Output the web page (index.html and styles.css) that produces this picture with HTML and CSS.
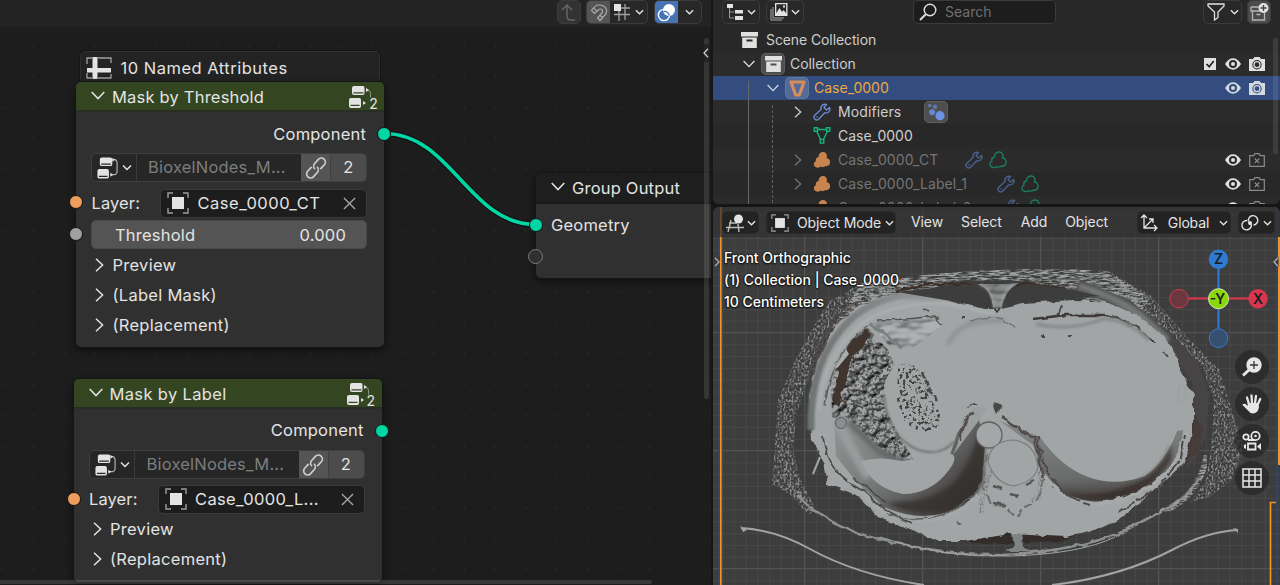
FILE: index.html
```html
<!DOCTYPE html>
<html lang="en">
<head>
<meta charset="utf-8">
<title>Geometry Nodes</title>
<link rel="stylesheet" href="styles.css">
</head>
<body>
<svg class="defs" width="0" height="0">
  <symbol id="down" viewBox="0 0 10 6"><path d="M1 1l4 4 4-4" fill="none" stroke="currentColor" stroke-width="1.5"/></symbol>
  <symbol id="fold" viewBox="0 0 14 9"><path d="M.7 1L7 7.6 13.3 1" fill="none" stroke="currentColor" stroke-width="1.5"/></symbol>
  <symbol id="right" viewBox="0 0 9 14"><path d="M1 .8L7.6 7 1 13.2" fill="none" stroke="currentColor" stroke-width="1.5"/></symbol>
  <symbol id="cross" viewBox="0 0 14 14"><path d="M1 1l12 12M13 1L1 13" fill="none" stroke="currentColor" stroke-width="1.4"/></symbol>
  <symbol id="tree" viewBox="0 0 24 24"><path fill="currentColor" fill-rule="evenodd" d="M6 1h9q2 0 2 2v5q0 2-2 2H6q-2 0-2-2V3q0-2 2-2zm-.5 6.200v1.300h10V7.200zM3.500 13h8q2 0 2 2v6q0 2-2 2h-8q-2 0-2-2v-6q0-2 2-2zM3 20v1.400h9V20z"/><path d="M18 3q4 0 4 4v8q0 4-4 4h-3" fill="none" stroke="currentColor" stroke-width="1.300" opacity=".7"/><path d="M17 1.500v4l3-2zM15 17v4l3-2z" fill="currentColor"/></symbol>
  <symbol id="group" viewBox="0 0 24 24"><path fill="currentColor" fill-rule="evenodd" d="M6 1h9q1.500 0 1.500 2v5q0 2-1.500 2H6q-2 0-2-2V3q0-2 2-2zm-.5 6.200v1.200h10V7.200zM3 13h8.500q1.500 0 1.500 2v6q0 2-1.500 2H3q-2 0-2-2v-6q0-2 2-2zm-.5 6.800v1.300h9v-1.300zM18 3v4l3-2zM15 16v4l3-2z"/><path d="M20 5.500q2.500 0 2.500 3v4" fill="none" stroke="currentColor" opacity=".5"/></symbol>
  <symbol id="link" viewBox="0 0 24 24"><g fill="none" stroke="currentColor" stroke-width="1.700" transform="rotate(-48 12 12)"><path d="M10 8H4a4 4 0 0 0 0 8h5.500a4 4 0 0 0 4-4"/><path d="M14 16h6a4 4 0 0 0 0-8h-5.500a4 4 0 0 0-4 4"/></g></symbol>
  <symbol id="object" viewBox="0 0 22 22"><path d="M1 6V1h5M16 1h5v5M21 16v5h-5M6 21H1v-5" fill="none" stroke="currentColor" stroke-width="1.4" opacity=".65"/><rect x="5" y="5" width="12" height="12" fill="currentColor"/></symbol>
  <symbol id="sheet" viewBox="0 0 26 22"><path d="M1 7V1h5M12 1h13v5M25 17v4H12M6 21H1v-5" fill="none" stroke="currentColor" stroke-width="1.3" opacity=".65"/><path d="M6.500 0h5v11H25v4.500H11.500V22h-5v-6.500H1V11h5.500z" fill="currentColor"/></symbol>
  <symbol id="box" viewBox="0 0 17 16"><path fill="currentColor" fill-rule="evenodd" d="M0 0h17v4.500H0zM1.200 5.500h14.600V16H1.200zM5.500 7.500v2h6v-2z"/></symbol>
  <symbol id="wrench" viewBox="0 0 18 18"><path d="M16.500 4.500l-3 2.500-2.500-2.500L13.500 1.500C10.500.3 7.300 2.500 8 6.500L1.800 12.200C.5 13.500 1 15.200 2 16.200s2.700 1 3.800-.2L11.500 10C15.500 10.700 17.700 7.500 16.500 4.500z" fill="none" stroke="currentColor" stroke-width="1.5" stroke-linejoin="round"/><circle cx="4" cy="14" r=".8" fill="currentColor"/></symbol>
  <symbol id="mesh" viewBox="0 0 17 17"><g fill="none" stroke="currentColor" stroke-width="1.4"><path d="M4 2.500h9M3.300 4.500L7 12.500M13.700 4.500L10 12.500"/><path d="M.7.700H4v3.600H.7zM13 .7h3.300v3.600H13zM6.800 12.500h3.400v3.600H6.800z"/></g></symbol>
  <symbol id="cloud" viewBox="0 0 18 18"><path d="M5.500 6C5.500 2.500 8 .7 10.500 1c3 .4 4.300 3.500 3 6 2.700.5 4.200 3 3.400 5.500-.7 2-2.500 3-4.500 2.500-1.300 1.500-3.500 1.300-4.500.6C6 17.300 1.800 17 1 14c-.4-1.800.3-3 1.800-3.800C2.300 8 3.500 6.500 5.500 6z"/></symbol>
  <symbol id="eye" viewBox="0 0 16 12"><path fill="currentColor" fill-rule="evenodd" d="M0 6Q3.500.3 8 .3T16 6q-3.500 5.700-8 5.700T0 6zm8-4a4 4 0 1 0 0 8 4 4 0 0 0 0-8z"/><circle cx="8" cy="6" r="2" fill="currentColor"/></symbol>
  <symbol id="camera" viewBox="0 0 16 14"><path fill="currentColor" fill-rule="evenodd" d="M0 2h4l1.500-2h5L12 2h4v12H0zM8 3a4.700 4.700 0 1 0 0 9.400A4.700 4.700 0 0 0 8 3z"/><circle cx="8" cy="7.700" r="3" fill="none" stroke="currentColor" stroke-width="1.300"/></symbol>
  <symbol id="nocam" viewBox="0 0 16 14"><path d="M.7 2.700h4L6 .7h4l1.300 2h4v10.600H.7zM5.700 5.500l4.600 4.600M10.300 5.500l-4.600 4.600" fill="none" stroke="currentColor" stroke-width="1.200"/></symbol>
</svg>

<main class="app">
  <section class="nodes">
    <header class="bar nodes-bar">
      <span class="btn up"><svg width="24" height="23" viewBox="0 0 24 23"><path d="M5 9l5-5 5 5M10 4v11q0 4 4 4h4" fill="none" stroke="currentColor" stroke-width="1.400"/></svg></span>
      <span class="btn snap"><b class="seg on"><svg width="23" height="23" viewBox="0 0 23 23"><path d="M4.500 9.500Q8 4 12 4q6 0 7.500 5 .5 4-3 6.500L13 19.500 10.500 17l4-4.500q1.800-2 .8-3.500-1.800-2-4 0L7.500 12.500zM6.800 7.200l3 3M13 14.300l2.700 2.400" fill="none" stroke="currentColor" stroke-width="1.200"/></svg></b><b class="seg"><svg width="18" height="18" viewBox="0 0 18 18"><path d="M1 11.500h16M6 8v10M8 5h9M12 1v16" stroke="currentColor" stroke-width="1.300" opacity=".65"/><rect x="1" y="1" width="7" height="7" fill="currentColor"/></svg><svg width="9" height="6"><use href="#down"/></svg></b></span>
      <span class="btn over"><b class="seg blue"><svg width="19" height="19" viewBox="0 0 19 19"><circle cx="7" cy="12" r="5.600" fill="none" stroke="#fff" stroke-width="1.400"/><circle cx="12" cy="7" r="6" fill="#fff"/><path d="M6.500 8.500q4-1 6 4" fill="none" stroke="#4772b3" stroke-width="1.200"/></svg></b><b class="seg"><svg width="9" height="6"><use href="#down"/></svg></b></span>
    </header>
    <div class="canvas">
      <svg class="wire" width="160" height="100" viewBox="0 0 160 100"><path d="M4 4.500C72 4.500 88 95.500 156 95.500" fill="none" stroke="#121212" stroke-width="6"/><path d="M4 4.500C72 4.500 88 95.500 156 95.500" fill="none" stroke="#00d6a3" stroke-width="3.600"/></svg>

      <div class="tag"><svg width="26" height="22"><use href="#sheet"/></svg><span>10 Named Attributes</span></div>

      <article class="node threshold-node">
        <h2><svg class="fold" width="14" height="9"><use href="#fold"/></svg><span>Mask by Threshold</span><svg class="grp" width="24" height="24"><use href="#group"/></svg><small>2</small></h2>
        <div class="row out">Component</div>
        <div class="data"><span class="pick"><svg width="23" height="24"><use href="#tree"/></svg><svg width="10" height="7"><use href="#down"/></svg></span><span class="name">BioxelNodes_M...</span><span class="lnk"><svg width="24" height="24"><use href="#link"/></svg></span><span class="users">2</span></div>
        <div class="row layer"><span>Layer:</span><span class="field"><svg width="22" height="22"><use href="#object"/></svg><span>Case_0000_CT</span><svg width="13" height="13"><use href="#cross"/></svg></span></div>
        <div class="slider"><span>Threshold</span><span>0.000</span></div>
        <div class="row panel"><svg width="9" height="14"><use href="#right"/></svg>Preview</div>
        <div class="row panel"><svg width="9" height="14"><use href="#right"/></svg>(Label Mask)</div>
        <div class="row panel"><svg width="9" height="14"><use href="#right"/></svg>(Replacement)</div>
        <i class="socket green s1"></i><i class="socket orange s2"></i><i class="socket grey s3"></i>
      </article>

      <article class="node label-node">
        <h2><svg class="fold" width="14" height="9"><use href="#fold"/></svg><span>Mask by Label</span><svg class="grp" width="24" height="24"><use href="#group"/></svg><small>2</small></h2>
        <div class="row out">Component</div>
        <div class="data"><span class="pick"><svg width="23" height="24"><use href="#tree"/></svg><svg width="10" height="7"><use href="#down"/></svg></span><span class="name">BioxelNodes_M...</span><span class="lnk"><svg width="24" height="24"><use href="#link"/></svg></span><span class="users">2</span></div>
        <div class="row layer"><span>Layer:</span><span class="field"><svg width="22" height="22"><use href="#object"/></svg><span>Case_0000_L...</span><svg width="13" height="13"><use href="#cross"/></svg></span></div>
        <div class="row panel"><svg width="9" height="14"><use href="#right"/></svg>Preview</div>
        <div class="row panel"><svg width="9" height="14"><use href="#right"/></svg>(Replacement)</div>
        <i class="socket green s1"></i><i class="socket orange s2"></i>
      </article>

      <article class="node output-node">
        <h2><svg class="fold" width="14" height="9"><use href="#fold"/></svg><span>Group Output</span></h2>
        <div class="row in">Geometry</div>
        <i class="socket green s4"></i><i class="socket hollow s5"></i>
      </article>
      <i class="scroll-v"></i><i class="scroll-h"></i>
      <span class="tab"><svg width="6" height="10" viewBox="0 0 6 10"><path d="M5 .7L1 5l4 4.300" fill="none" stroke="#ccc" stroke-width="1.300"/></svg></span>
    </div>
  </section>

  <div class="side">
    <section class="outliner">
      <header class="bar out-bar">
        <span class="btn b1"><svg width="18" height="18" viewBox="0 0 18 18"><path d="M1 1h6v4H1zM9 7h8v3.500H9zM9 13h8v4H9z" fill="currentColor"/><path d="M3.500 5v10H8M3.500 9H8" fill="none" stroke="currentColor" opacity=".6"/></svg><svg width="9" height="6"><use href="#down"/></svg></span>
        <span class="btn b2"><svg width="18" height="18" viewBox="0 0 18 18"><path d="M1 6v11h11M3 4v11h11" fill="none" stroke="currentColor" opacity=".7"/><path fill="currentColor" fill-rule="evenodd" d="M5 0h12.500v13H5zm1.300 1.300v9L9.500 5l2.500 4 1.500-2 2.700 3.300v-9zM13 2.500h2v2h-2z"/></svg><svg width="9" height="6"><use href="#down"/></svg></span>
        <span class="search"><svg width="18" height="18" viewBox="0 0 18 18"><circle cx="11" cy="7" r="5.800" fill="none" stroke="currentColor" stroke-width="1.400"/><path d="M7 11l-6 6" stroke="currentColor" stroke-width="2"/></svg><span>Search</span></span>
        <span class="btn b3"><svg width="18" height="18" viewBox="0 0 18 18"><path d="M1 1h16v2l-6 6v5.500L7.500 17V9L1 3z" fill="none" stroke="currentColor" stroke-width="1.300"/></svg><svg width="9" height="6"><use href="#down"/></svg></span>
        <span class="btn b4"><svg width="19" height="19" viewBox="0 0 19 19"><path d="M1 4h8M1 4v4h15M2.500 8v9h12V9M6.500 11.500h4" fill="none" stroke="currentColor" stroke-width="1.300" opacity=".7"/><circle cx="13.500" cy="5" r="5" fill="currentColor"/><path d="M10.500 5h6M13.500 2v6" stroke="#444" stroke-width="1.400"/></svg></span>
      </header>
      <div class="rows">
        <div class="item l0"><svg width="17" height="16"><use href="#box"/></svg><span>Scene Collection</span></div>
        <div class="item l1"><svg class="tw" width="12" height="8"><use href="#fold"/></svg><span class="hl"><svg width="17" height="16"><use href="#box"/></svg></span><span>Collection</span><span class="flags"><svg width="12" height="12" viewBox="0 0 12 12"><path d="M0 0h12v12H0z" fill="currentColor"/><path d="M2.500 6l2.700 2.700L9.700 3" fill="none" stroke="#222" stroke-width="1.700"/></svg><svg width="16" height="12"><use href="#eye"/></svg><svg width="16" height="14"><use href="#camera"/></svg></span></div>
        <div class="item l2 active"><svg class="tw" width="12" height="8"><use href="#fold"/></svg><span class="hl"><svg width="17" height="17" viewBox="0 0 17 17"><path d="M2 2h13L10.300 15H6.700z" fill="none" stroke="#d58d60" stroke-width="3.200" stroke-linejoin="round"/></svg></span><span>Case_0000</span><span class="flags"><svg width="16" height="12"><use href="#eye"/></svg><svg width="16" height="14"><use href="#camera"/></svg></span></div>
        <div class="item l3"><svg class="tw" width="8" height="12"><use href="#right"/></svg><svg class="ic wr" width="18" height="18"><use href="#wrench"/></svg><span>Modifiers</span><span class="hl mod"><svg width="18" height="18" viewBox="0 0 18 18" fill="#6c93e6"><circle cx="2.800" cy="2.500" r="1.800" opacity=".6"/><circle cx="8" cy="3.700" r="2.200" opacity=".6"/><circle cx="5.200" cy="9.300" r="3" opacity=".85"/><circle cx="13" cy="12.700" r="4.600"/></svg></span></div>
        <div class="item l3 leaf"><svg class="ic ms" width="18" height="17"><use href="#mesh"/></svg><span>Case_0000</span></div>
        <div class="item l3 dim"><svg class="tw" width="8" height="12"><use href="#right"/></svg><svg class="ic vol" width="18" height="18"><use href="#cloud"/></svg><span>Case_0000_CT</span><svg class="m1" width="18" height="18"><use href="#wrench"/></svg><svg class="m2" width="18" height="18"><use href="#cloud"/></svg><span class="flags"><svg width="16" height="12"><use href="#eye"/></svg><svg width="16" height="14"><use href="#nocam"/></svg></span></div>
        <div class="item l3 dim"><svg class="tw" width="8" height="12"><use href="#right"/></svg><svg class="ic vol" width="18" height="18"><use href="#cloud"/></svg><span>Case_0000_Label_1</span><svg class="m1" width="18" height="18"><use href="#wrench"/></svg><svg class="m2" width="18" height="18"><use href="#cloud"/></svg><span class="flags"><svg width="16" height="12"><use href="#eye"/></svg><svg width="16" height="14"><use href="#nocam"/></svg></span></div>
        <div class="item l3 dim"><svg class="tw" width="8" height="12"></svg><svg class="ic vol" width="18" height="18"><use href="#cloud"/></svg><span>Case_0000_Label_2</span><svg class="m1" width="18" height="18"><use href="#wrench"/></svg><svg class="m2" width="18" height="18"><use href="#cloud"/></svg><span class="flags"><svg width="16" height="12"><use href="#eye"/></svg><svg width="16" height="14"><use href="#nocam"/></svg></span></div>
        <i class="guide g1"></i><i class="guide g2"></i><i class="oscroll"></i>
      </div>
    </section>

    <section class="viewport">
      <svg class="scene" width="567" height="378" viewBox="713 207 567 378">
        <defs>
          <pattern id="minor" x="804.500" y="332.500" width="11.800" height="11.800" patternUnits="userSpaceOnUse"><path d="M.5 0v11.800M0 .5h11.800" stroke="#474747" stroke-width="1"/></pattern>
          <pattern id="major" x="804" y="332" width="118" height="118" patternUnits="userSpaceOnUse"><path d="M.5 0v118M0 .5h118" stroke="#525252" stroke-width="1.200"/></pattern>
          <filter id="speck" x="-5%" y="-5%" width="110%" height="110%" color-interpolation-filters="sRGB"><feTurbulence type="fractalNoise" baseFrequency=".5 .35" numOctaves="3" seed="4"/><feColorMatrix values="0 0 0 0 0  0 0 0 0 0  0 0 0 0 0  3.500 0 0 0 -1.550" result="n"/><feComposite in="SourceGraphic" in2="n" operator="in"/></filter>
          <filter id="streak" x="0" y="0" width="100%" height="100%" color-interpolation-filters="sRGB"><feTurbulence type="fractalNoise" baseFrequency=".1 .6" numOctaves="3" seed="9"/><feColorMatrix values="0 0 0 0 0  0 0 0 0 0  0 0 0 0 0  3.500 0 0 0 -1.300" result="n"/><feComposite in="SourceGraphic" in2="n" operator="in"/></filter>
          <filter id="gut" x="0" y="0" width="100%" height="100%" color-interpolation-filters="sRGB"><feTurbulence type="fractalNoise" baseFrequency=".13 .15" numOctaves="3" seed="12"/><feGaussianBlur stdDeviation=".6"/><feDiffuseLighting surfaceScale="4.500" diffuseConstant="1" lighting-color="#a6aaaa" result="l"><feDistantLight azimuth="235" elevation="58"/></feDiffuseLighting><feComposite in="l" in2="SourceGraphic" operator="in"/></filter>
          <filter id="grain" x="0" y="0" width="100%" height="100%" color-interpolation-filters="sRGB"><feTurbulence type="fractalNoise" baseFrequency=".05 .09" numOctaves="2" seed="5" result="t"/><feDiffuseLighting in="t" surfaceScale="3" diffuseConstant="1.080" lighting-color="#fff" result="l"><feDistantLight azimuth="250" elevation="58"/></feDiffuseLighting><feComposite in="l" in2="SourceGraphic" operator="arithmetic" k1="1"/><feComposite in2="SourceGraphic" operator="in"/></filter>
          <filter id="pits" x="0" y="0" width="100%" height="100%" color-interpolation-filters="sRGB"><feTurbulence type="fractalNoise" baseFrequency=".32" numOctaves="2" seed="3"/><feColorMatrix values="0 0 0 0 0  0 0 0 0 0  0 0 0 0 0  8 0 0 0 -4.200" result="n"/><feComposite in="SourceGraphic" in2="n" operator="in"/></filter>
          <filter id="rough" x="-10%" y="-10%" width="120%" height="120%" color-interpolation-filters="sRGB"><feTurbulence type="fractalNoise" baseFrequency=".1" numOctaves="2" seed="7"/><feDisplacementMap in="SourceGraphic" scale="6" xChannelSelector="R" yChannelSelector="G"/><feGaussianBlur stdDeviation=".5"/></filter>
          <filter id="soft" x="-20%" y="-20%" width="140%" height="140%"><feGaussianBlur stdDeviation="2.200"/></filter>
          <filter id="fine"><feGaussianBlur stdDeviation=".8"/></filter>
          <linearGradient id="lungL" x1="0" y1="0" x2="1" y2=".7"><stop offset="0" stop-color="#929595"/><stop offset=".45" stop-color="#7b7d7d"/><stop offset=".72" stop-color="#5d5d5d"/><stop offset="1" stop-color="#3b3432"/></linearGradient>
          <linearGradient id="lungR" x1="0" y1="0" x2=".15" y2="1"><stop offset="0" stop-color="#858888"/><stop offset=".75" stop-color="#6a6c6c"/><stop offset="1" stop-color="#484341"/></linearGradient>
          <linearGradient id="wall" x1="810" y1="0" x2="950" y2="0" gradientUnits="userSpaceOnUse"><stop offset="0" stop-color="#707373"/><stop offset="1" stop-color="#9b9e9e"/></linearGradient>
        </defs>
        <rect x="713" y="207" width="567" height="378" fill="#3d3d3d"/>
        <rect x="713" y="207" width="567" height="378" fill="url(#minor)"/>
        <rect x="713" y="207" width="567" height="378" fill="url(#major)"/>
        <path d="M719 207v378M1276.500 207v378" stroke="#2d4669" stroke-width="1.500"/>

        <!-- skin shell -->
        <g filter="url(#speck)" fill="#a0a3a3" opacity=".8">
          <path d="M772 485L778 400 799 352 828 302 862 283 900 285 850 325 826 355 806 385 796 415 793 450 800 478 815 508 800 503 779 487z"/>
          <path d="M1110 272L1150 295 1190 340 1219 369 1232 410 1244 448 1232 480 1211 496 1190 503 1206 480 1211 450 1214 400 1203 368 1170 332 1120 300z"/>
        </g>
        <path d="M784 462Q785 488 812 512" fill="none" stroke="#8b8e8e" stroke-width="8" filter="url(#speck)"/>
        <g filter="url(#streak)"><path d="M862 283Q980 264 1108 271L1150 298 1135 320 1060 287 1010 280 960 281 870 304 830 330z" fill="#a0a3a3"/></g>
        <path d="M798 495Q808 508 820 514 850 534 900 544 950 555 1000 554 1065 553 1118 534 1145 520 1160 512 1187 500 1203 475" fill="none" stroke="#8d9090" stroke-width="2.600" filter="url(#rough)"/>
        <path d="M880 537Q940 558 1010 556T1115 537" fill="none" stroke="#a2a5a5" stroke-width="1"/>
        <path d="M1160 512Q1198 500 1207 455" fill="none" stroke="#999c9c" stroke-width="6" filter="url(#streak)"/>

        <!-- dark muscle wall -->
        <path d="M1075 291Q1120 303 1158 334L1192 382 1194 430 1186 468 1198 455 1207 430 1209 395 1198 362 1168 332 1130 300 1080 280z" fill="#464444"/>
        <path d="M1190 405l12 25-1 18-23 24z" fill="#463a36" opacity=".75" filter="url(#rough)"/>
        <path d="M1078 286Q1125 297 1168 341M1090 291q42 10 68 42" fill="none" stroke="#777a7a" stroke-width="7" filter="url(#soft)"/>
        <path d="M920 532L985 545 1060 541 1110 523 1080 531 1000 530z" fill="#342c29" filter="url(#rough)"/>
        <path d="M1012 533h9l2 14 8 4h-25l8-5z" fill="#808383" filter="url(#rough)"/>
        <path d="M813 385Q822 335 865 303L850 302Q814 335 807 382z" fill="#493f3b" filter="url(#speck)"/>

        <!-- body -->
        <g filter="url(#rough)"><path d="M810 407Q809 372 830 336 848 308 872 301 890 292 930 297L985 309 997 309 1023 303 1073 300Q1118 300 1147 323 1172 338 1180 368L1193 395 1193 430 1183 465 1163 483 1137 505 1123 517 1090 532 1065 537 1010 534 965 541 937 541 910 529 880 518 857 495 827 484 822 456 812 440z" fill="#a1a5a5"/></g>
        <path d="M811 430Q809 360 850 320 874 299 905 295L950 299" fill="none" stroke="url(#wall)" stroke-width="7" filter="url(#fine)"/>
        <path d="M819 410Q822 355 866 321 893 303 946 303L994 314" fill="none" stroke="#adb0b0" stroke-width="2.500" filter="url(#fine)"/>
        <path d="M825 405Q831 355 868 325" fill="none" stroke="#5d5e5e" stroke-width="1.500" filter="url(#rough)"/>
        <path d="M897 292L943 287 974 285Q988 287 991 308L963 303z" fill="#3e3d3d"/>
        <path d="M897 292L925 284 973 284M1067 290l-37-7-15 4" fill="none" stroke="#3a2e29" stroke-width="2.500" filter="url(#rough)"/>
        <path d="M1005 302Q1011 285 1030 284L1067 289 1100 296 1057 299z" fill="#3e3d3d"/>
        <path d="M976 284Q991 287 993 309L1001 309Q1006 288 1020 283L1002 284z" fill="#8b8e8e" filter="url(#grain)"/>
        <path d="M980 285q12 3 14 22M1013 284q-11 8-12 24" fill="none" stroke="#a9acac" stroke-width="1.200" filter="url(#fine)"/>
        <path d="M994 308l3 4 3-4" fill="none" stroke="#3a3636" stroke-width="1.500"/>

        <!-- folds under the upper wall -->
        <path d="M870 323l30-3 35-3 8 7-18 15-12 9-24-2z" fill="#adb1b1" filter="url(#grain)"/>
        <path d="M869 322l15 12 18 14" fill="none" stroke="#7c7f7f" stroke-width="3.500" filter="url(#rough)"/>
        <path d="M876 320q30 0 58-4l8 8" fill="none" stroke="#525353" stroke-width="1.300" filter="url(#rough)"/>
        <path d="M948 345q8-21 36-24l20-1" fill="none" stroke="#8b8e8e" stroke-width="4" filter="url(#soft)"/>
        <path d="M970 321q18-6 33-2l12 8" fill="none" stroke="#6c6f6f" stroke-width="1.300" filter="url(#rough)"/>
        <path d="M1033 319l32-4 38 0Q1125 315 1154 342" fill="none" stroke="#3d3939" stroke-width="2.300" filter="url(#rough)"/>
        <path d="M1036 324q32 8 67-5 24 0 46 21" fill="none" stroke="#8b8e8e" stroke-width="4" filter="url(#fine)"/>
        <path d="M1058 315l4-10M1164 352l4 5M1041 336h3M1069 335h3M962 318h4M924 308l5 4" stroke="#4b4949" stroke-width="2" filter="url(#rough)"/>
        <ellipse cx="1182" cy="394" rx="4" ry="9" fill="none" stroke="#999c9c"/>

        <!-- bowel -->
        <path d="M868 328l20 22 10 22-14 12 3 28 11 22 16 26-14 2-24-8-15-20-17-14-12-3-1-28 4-25z" fill="#888" filter="url(#gut)"/>
        <path d="M868 335l20 20 6 16-12 12 3 28 11 22 12 22-12 2-20-8-15-20-15-14-9-6 2-25 6-20z" fill="#3c3937" filter="url(#pits)" opacity=".75"/>
        <path d="M866 328l-17 16-10 22-7 34 6 7 7-20 5-25 10-12 11-15z" fill="#40342f" filter="url(#rough)"/>
        <path d="M833 371l7-11 6-11 3 5-10 12z" fill="#aaadad"/>
        <path d="M885 383Q890 365 905 360L930 373 941 402 957 410 956 438Q950 453 930 453 908 449 898 431L884 406z" fill="#a1a5a5"/>
        <path d="M884 395Q887 432 912 447 937 460 955 441" fill="none" stroke="#626464" stroke-width="1.500" filter="url(#fine)"/>
        <g filter="url(#pits)" fill="#414141"><path d="M898 365q20-6 24 15l8 19 11 15-3 15-16 4-18-11-7-22z"/></g>
        <path d="M923 371l5 17 9 13" fill="none" stroke="#484646" stroke-width="2.500" stroke-dasharray="7 2" filter="url(#rough)"/>
        <path d="M965 407l9-4 4 2zM993 402l10 3-6 9z" fill="#484646" filter="url(#rough)"/>

        <!-- left lung base -->
        <path d="M834 420Q840 411 850 420L873 442 900 462 950 455 955 440Q959 421 979 420L985 445 982 480Q973 505 945 513 916 521 884 507L855 480 836 456z" fill="url(#lungL)"/>
        <path d="M980 424q-7 38-28 60-22 17-49 17l-17 2q22 14 61 8 28-6 37-31l1-41z" fill="#332d2b" opacity=".75" filter="url(#soft)"/>
        <path d="M839 426L866 474" stroke="#9a9d9d" stroke-width="9" fill="none" stroke-linecap="round" filter="url(#soft)"/>
        <path d="M851 424L880 452 905 462" stroke="#646666" stroke-width="6" fill="none" stroke-linecap="round" filter="url(#soft)"/>
        <circle cx="841" cy="423" r="5.500" fill="#8b8e8e" stroke="#5d5f5f"/>
        <path d="M861 461q18-5 41 0l50-7q6 4-3 16-18 24-46 24-31-6-42-33z" fill="#a1a5a5"/>
        <path d="M953 455q9-18 8-35l14-13 12 0-7 12-12 16z" fill="#9b9e9e"/>
        <path d="M824 436q3 32 28 48l32 29 26 7q45 4 68-26" fill="none" stroke="#a6a9a9" stroke-width="4" filter="url(#rough)"/>
        <path d="M823 437q4 35 40 54l22 19 27 14M853 479l20 12 12 11" fill="none" stroke="#4a4949" stroke-width="1.800" filter="url(#rough)"/>
        <path d="M885 514q60 18 97-30" fill="none" stroke="#5d5d5d" stroke-width="1.500" filter="url(#rough)"/>
        <path d="M820 457l-7 17" stroke="#a3a6a6" stroke-width="2"/>

        <!-- right lung base -->
        <path d="M1000 421L1040 437Q1061 467 1088 477 1115 487 1145 476 1166 462 1177 431L1183 430 1180 455Q1160 487 1125 499 1085 508 1052 487L1042 470 1033 445z" fill="url(#lungR)"/>
        <path d="M1058 490q42 13 87-12 17-11 27-34l-1 16q-20 34-58 39-29 3-55-9z" fill="#352b28" opacity=".8" filter="url(#soft)"/>
        <path d="M1043 474q17 26 52 30 51-3 82-44l9-29" fill="none" stroke="#a6a9a9" stroke-width="4" filter="url(#rough)"/>
        <path d="M1038 437q6 55 52 67M1118 512l37-22 25-28 5-28" fill="none" stroke="#4c4847" stroke-width="2" stroke-dasharray="18 3" filter="url(#rough)"/>

        <!-- vertebra -->
        <path d="M975 414q-15 3-14 26M1001 418l34 20 8 40" fill="none" stroke="#514c4a" stroke-width="2.500" filter="url(#rough)"/>
        <circle cx="989" cy="435" r="13" fill="#a3a7a7" stroke="#615f5f" stroke-width="1.300"/>
        <path d="M988 462Q990 441 1013 440 1035 442 1038 467 1035 482 1013 486 995 483 988 462z" fill="#a1a5a5" stroke="#7b7d7d" stroke-width="1.200"/>
        <path d="M986 454l-3 34 9 17 13 1 11 12 7-11 14-6 8-23-4-25" fill="none" stroke="#6c6e6e" stroke-width="2" stroke-dasharray="9 5" filter="url(#rough)"/>
        <path d="M1010 495l8 2M1026 485l8-4M993 486l9 3M1005 505l-12-2M957 522l4 2" stroke="#565656" stroke-width="2.500" filter="url(#rough)"/>
        <path d="M991 470q-10 28-10 43M1040 470q4 22-8 32" fill="none" stroke="#777a7a" stroke-width="5" filter="url(#speck)"/>

        <!-- scanner table -->
        <path d="M741 528Q776 530 810 549 857 575 924 585M1052 585Q1120 577 1172 550 1206 532 1237 530" fill="none" stroke="#a1a4a1" stroke-width="2"/>
        <path d="M740 526l7 4-4 2zM1233 528l5 1v4z" fill="#a1a4a1"/>

        <path d="M720.800 207v378" stroke="#f39322" stroke-width="1.700"/>
        <path d="M1279 237v228" stroke="#f39322" stroke-width="2"/><path d="M1276 502.500h-5.500V585" fill="none" stroke="#f39322" stroke-width="1.700"/>
      </svg>

      <header class="bar view-bar">
        <span class="btn v1"><svg width="18" height="18" viewBox="0 0 18 18"><path d="M3 9h8M0 13.500h18M5 6L2 18M12 10l1 8" stroke="currentColor" stroke-width="1.400" opacity=".8"/><circle cx="12.500" cy="5" r="4.500" fill="currentColor"/></svg><svg width="9" height="6"><use href="#down"/></svg></span>
        <span class="btn v2"><svg width="18" height="18"><use href="#object"/></svg><span>Object Mode</span><svg width="9" height="6"><use href="#down"/></svg></span>
        <span class="menu m-view">View</span><span class="menu m-select">Select</span><span class="menu m-add">Add</span><span class="menu m-object">Object</span>
        <span class="btn v3"><svg width="18" height="18" viewBox="0 0 18 18"><path d="M1 4l3-3 3 3M4 1v13h13M14 11l3 3-3 3M4 14l9-9M9 5h4v4" fill="none" stroke="currentColor" stroke-width="1.300"/></svg><span>Global</span><svg width="9" height="6"><use href="#down"/></svg></span>
        <span class="btn v4"><svg width="18" height="18" viewBox="0 0 18 18"><path d="M10 9.500a4.700 4.700 0 1 1-4-3M7.500 7.500a4.700 4.700 0 1 1 5 3.500" fill="none" stroke="currentColor" stroke-width="1.400"/><circle cx="9" cy="9" r="2" fill="currentColor"/></svg><svg width="9" height="6"><use href="#down"/></svg></span>
      </header>
      <div class="info"><p>Front Orthographic</p><p>(1) Collection | Case_0000</p><p>10 Centimeters</p></div>

      <svg class="gizmo" width="102" height="102" viewBox="1167 248 102 102">
        <path d="M1218.500 259v80" stroke="#2f7bd1" stroke-width="2"/><path d="M1179 298.500h79" stroke="#e0344c" stroke-width="2"/>
        <circle cx="1218.500" cy="259.300" r="9.700" fill="#2f7bd1"/><circle cx="1258" cy="298.700" r="9.700" fill="#d6364e"/>
        <circle cx="1179" cy="298.700" r="9.300" fill="#6b3840" stroke="#d6364e"/><circle cx="1218.500" cy="338.200" r="9.300" fill="#385070" stroke="#2f7bd1"/>
        <circle cx="1218.500" cy="298.700" r="10" fill="#88d80a" stroke="#d6edb0"/>
        <text x="1218.500" y="264">Z</text><text x="1258" y="303.500">X</text><text x="1217.500" y="303.500">-Y</text>
      </svg>
      <div class="tools">
        <span><svg width="20" height="20" viewBox="0 0 20 20"><circle cx="12" cy="8" r="7.700" fill="currentColor"/><path d="M8 12l-7 6.500" stroke="currentColor" stroke-width="3"/><path d="M8 8h8M12 4v8" stroke="#333" stroke-width="1.300"/></svg></span>
        <span><svg width="20" height="20" viewBox="0 0 20 20"><path fill="none" stroke="currentColor" stroke-width="2.300" stroke-linecap="round" d="M7 10L5 3.500M10 9L9.500 1.500M13 9l1-7M15.500 11l2.700-6"/><path fill="currentColor" d="M5.500 9h11l.5 4q-1 6-6 6.500-3 0-5-3L.5 11Q1 9 3.500 10L6 12z"/></svg></span>
        <span><svg width="20" height="20" viewBox="0 0 20 20"><g fill="none" stroke="currentColor" stroke-width="1.800"><circle cx="4" cy="6" r="2.700"/><circle cx="13.500" cy="5" r="4.200"/><path d="M6 9h7M6 12.500h7.500v6H6z"/></g><path d="M19 12v7l-4-3.500zM4 13v5l-2-1v-3z" fill="currentColor"/><circle cx="13.500" cy="5" r="1.300" fill="currentColor"/></svg></span>
        <span><svg width="20" height="20" viewBox="0 0 20 20"><path d="M1 1h18v18H1zM7 1v18M13 1v18M1 7h18M1 13h18" fill="none" stroke="currentColor" stroke-width="1.500"/></svg></span>
      </div>
      <svg class="flap left" width="6" height="10" viewBox="0 0 6 10"><path d="M1 .7L5 5 1 9.300" fill="none" stroke="#aaa" stroke-width="1.400"/></svg>
      <svg class="flap rightside" width="6" height="10" viewBox="0 0 6 10"><path d="M5 .7L1 5l4 4.300" fill="none" stroke="#aaa" stroke-width="1.400"/></svg>
    </section>
  </div>
</main>
</body>
</html>
```
FILE: styles.css
```css
* { box-sizing: border-box; }
body { margin: 0; background: #161616; color: #e3e3e3; font-family: Inter, "Liberation Sans", sans-serif; overflow: hidden; }
svg { display: block; flex: none; }
.defs { position: absolute; }
.app { display: grid; grid-template-columns: 711px 567px; column-gap: 2px; width: 1280px; height: 585px; }
.bar { display: flex; color: #e3e3e3; }
.btn { display: flex; align-items: center; justify-content: center; height: 24px; border: 1px solid #3b3b3b; border-radius: 5px; background: #282828; overflow: hidden; flex: none; white-space: nowrap; }

/* node editor */
.nodes { display: flex; flex-direction: column; min-width: 0; overflow: hidden; background: #1d1d1d; }
.nodes-bar { height: 27px; background: #232323; padding-left: 557px; }
.up { width: 24px; background: #333; color: #686868; }
.snap { width: 62px; margin-left: 5px; }
.over { width: 48px; margin-left: 6px; }
.seg { display: flex; align-items: center; justify-content: center; gap: 4px; height: 100%; flex: 1; }
.seg.on { flex: 0 0 23px; background: #545454; color: #aaa; }
.seg.blue { flex: 0 0 23px; background: #4772b3; }
.canvas { position: relative; flex: 1; background: radial-gradient(circle, #292929 0 .8px, transparent 1.200px) -13px 3.500px / 30.800px 30.800px; font-size: 16.500px; letter-spacing: .2px; }
.wire { position: absolute; left: 380px; top: 102px; }
.tag { position: absolute; left: 80px; top: 24px; width: 300px; height: 36px; display: flex; gap: 8.500px; padding: 5px 5px 0; border: 1px solid #303030; border-radius: 5px; background: #232323; line-height: 22px; letter-spacing: .5px; box-shadow: 0 0 0 1px #151515; }
.node { position: absolute; width: 308px; background: #303030; border-radius: 5px; box-shadow: 0 0 0 1px #161616, 0 3px 9px #0009; white-space: nowrap; }
.node h2 { display: flex; align-items: center; height: 30px; margin: 0; padding: 2px 5px 0 15px; background: #344621; border-radius: 5px 5px 0 0; border-bottom: 2px solid #292e24; font-size: inherit; font-weight: 400; }
.node h2 span { margin-left: 7px; flex: 1; }
.node h2 small { font-size: 14px; margin: 14px 1px 0 -3px; line-height: 16px; }
.fold { margin-top: -3px; }
.threshold-node { left: 76px; top: 55px; height: 265px; }
.label-node { left: 74px; top: 352px; height: 203px; width: 307.500px; }
.label-node h2 { letter-spacing: .35px; padding-left: 14.500px; }
.label-node .out { padding-top: 3px; }
.label-node .panel { padding-bottom: 2px; padding-left: 18.500px; }
.label-node .data { margin-left: 14.500px; }
.label-node .name { padding-left: 12px; }
.label-node .layer { padding-left: 15px; margin-top: 5px; margin-bottom: 1px; }
.label-node .field span { letter-spacing: .35px; }
.output-node { left: 536px; top: 146px; width: 200px; height: 105px; }
.output-node h2 { background: #1e1e1e; height: 31px; padding-top: 1px; border-color: #191919; }
.row { display: flex; align-items: center; height: 30px; }
.out { height: 39px; justify-content: flex-end; padding: 5px 18px 0 0; letter-spacing: .2px; }
.in { height: 41px; padding-left: 15px; }
.data { display: flex; margin: 2px 17px 0 15px; height: 29px; border: 1px solid #3f3f3f; border-radius: 5px; background: #262626; line-height: 27px; overflow: hidden; }
.pick { width: 45px; display: flex; align-items: center; justify-content: center; gap: 3px; border-right: 1px solid #3b3b3b; }
.name { width: 164px; padding-left: 11px; color: #7d7d7d; letter-spacing: .2px; }
.lnk { width: 30px; background: #545454; display: flex; align-items: center; justify-content: center; color: #ccc; border-right: 1px solid #414141; }
.users { flex: 1; text-align: center; background: #4c4c4c; }
.layer { margin-top: 6px; padding: 0 17px 0 15.500px; justify-content: space-between; letter-spacing: .1px; }
.field { width: 207px; height: 29px; display: flex; align-items: center; padding: 0 10px 0 6px; border: 1px solid #3a3a3a; border-radius: 5px; background: #1d1d1d; }
.field span { flex: 1; margin-left: 8.500px; letter-spacing: .5px; }
.field > svg:last-child { color: #aaa; }
.slider { margin: 2px 17px 1px 15px; height: 29px; padding: 0 20px 0 23px; display: flex; align-items: center; justify-content: space-between; background: #545454; border-radius: 5px; border: 1px solid #484848; }
.panel { padding-left: 19px; gap: 8.500px; letter-spacing: .28px; }
.socket { position: absolute; width: 14px; height: 14px; border: 1.500px solid #141414; border-radius: 50%; }
.green { background: #00d6a3; } .orange { background: #ed9e5c; } .grey { background: #a1a1a1; }
.hollow { background: #303030; border-color: #7c7c7c; width: 15px; height: 15px; }
.s1 { left: 301px; top: 45px; } .s2 { left: -7px; top: 113px; } .s3 { left: -7px; top: 145px; } .s4 { left: -7px; top: 45px; } .s5 { left: -8px; top: 76px; }
.scroll-v { position: absolute; left: 704px; top: 11px; width: 5px; height: 361px; border-radius: 3px; background: #ffffff1c; }
.scroll-h { position: absolute; left: -4px; top: 553px; width: 656px; height: 4px; border-radius: 3px; background: #ffffff20; }
.tab { position: absolute; left: 701px; top: 17px; padding: 4px 2px; background: #1d1d1daa; border-radius: 3px; }

/* outliner */
.side { display: grid; grid-template-rows: 204px 378px; row-gap: 3px; min-width: 0; }
.outliner { background: #282828; border-radius: 0 0 6px 6px; overflow: hidden; font-size: 14px; color: #cecece; }
.out-bar { height: 28px; padding-left: 9px; }
.out-bar .btn { gap: 3px; }
.b1 { width: 38px; } .b2 { width: 38px; margin-left: 6px; }
.search { display: flex; align-items: center; gap: 8px; width: 143px; height: 24px; margin-left: 109px; padding-left: 5px; border: 1px solid #3b3b3b; border-radius: 5px; background: #1d1d1d; color: #707070; line-height: 20px; }
.search svg { color: #ddd; }
.out-bar .b3 { width: 39px; margin-left: 147px; gap: 5px; } .out-bar .b4 { width: 24px; margin-left: 5px; background: #4b4b4b; }
.rows { position: relative; }
.item { display: flex; align-items: center; height: 24px; white-space: nowrap; background: #282828; }
.item > span:not(.hl):not(.flags) { margin-top: -1px; }
.item:nth-child(even) { background: #2b2b2b; }
.item.active { background: #334d80; color: #f1a73a; }
.active svg { color: #d4d8df; }
.l0 { padding-left: 28px; gap: 8px; letter-spacing: -.1px; }
.l1 { padding-left: 30px; letter-spacing: -.05px; } .l2 { padding-left: 54px; } .l3 { padding-left: 81px; }
.l3 { letter-spacing: .1px; }
.hl { display: flex; align-items: center; justify-content: center; width: 24px; height: 22px; border-radius: 5px; background: #ffffff2b; border: 1px solid #ffffff18; margin: 0 5px 0 6px; }
.l1 svg, .l0 svg { color: #e0e0e0; }
.ic { margin: -1px 7px 0 11px; }
.leaf { padding-left: 89px; letter-spacing: 0; }
.wr { color: #6787cf; } .ms { color: #13b27f; } .vol { fill: #c8844f; }
.item .mod { margin-left: 23px; }
.dim { color: #747474; }
.m1 { color: #4a5e8c; margin: -1px 0 0 27px; } .m2 { margin: -1px 0 0 6px; fill: none; stroke: #1d7c60; stroke-width: 1.400px; }
.dim + .dim .m1 { margin-left: 30px; }
.flags { display: flex; align-items: center; gap: 8px; margin: -1px 15.500px 0 auto; color: #e1e1e1; }
.l1 .flags svg:first-child { margin-right: 1px; }
.dim .flags svg:last-child { color: #8b8b8b; }
.guide { position: absolute; left: 35px; top: 53px; height: 125px; border-left: 1px solid #666; }
.g2 { left: 59px; top: 77px; height: 98px; border-left: 1px dashed #606060; }
.oscroll { position: absolute; right: 2px; top: 10px; width: 5px; height: 116px; background: #ffffff18; border-radius: 3px; }

/* 3D viewport */
.viewport { position: relative; overflow: hidden; border-radius: 6px 6px 0 0; }
.scene { position: absolute; left: 0; top: 0; }
.view-bar { position: relative; height: 30px; padding: 4px 0 0 9px; background: #303030b8; font-size: 14px; line-height: 22px; }
.view-bar .btn { height: 23px; border-color: #2b2b2b; background: #232323; gap: 4px; }
.view-bar .v1 { width: 37px; padding-left: 1px; gap: 3px; }
.view-bar .v2 { width: 130px; margin-left: 7px; padding: 0 3px 0 4px; gap: 4px; justify-content: flex-start; }
.v2 span { margin-left: 4px; flex: 1; letter-spacing: -.1px; }
.menu { letter-spacing: -.1px; }
.m-view { margin-left: 15px; } .m-select { margin-left: 18px; } .m-add { margin-left: 19px; } .m-object { margin-left: 18px; }
.view-bar .v3 { position: absolute; left: 424px; width: 94px; gap: 10px; } .view-bar .v4 { position: absolute; left: 525px; width: 37px; }
.v3 span { letter-spacing: -.15px; }
.info { position: absolute; left: 11px; top: 40px; font-size: 14px; font-weight: 500; line-height: 22px; color: #fff; text-shadow: 0 1px 2px #000, 0 0 2px #000; white-space: nowrap; letter-spacing: -.02px; }
.info p { margin: 0; }
.gizmo { position: absolute; left: 454px; top: 41px; font: 600 14px Inter, sans-serif; text-anchor: middle; fill: #1a1f25; }
.tools { position: absolute; left: 522px; top: 143px; display: flex; flex-direction: column; gap: 3px; }
.tools span { display: flex; align-items: center; justify-content: center; width: 34px; height: 34px; border-radius: 50%; background: #242424b0; color: #e6e6e6; }
.flap { position: absolute; top: 50px; left: 1px; background: #3338; }
.rightside { left: 560px; }
```
